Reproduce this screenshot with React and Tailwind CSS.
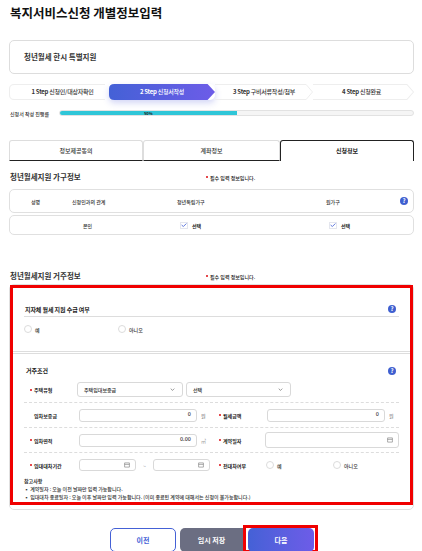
import React from "react";

const font = { fontFamily: '"Noto Sans CJK KR", "Noto Sans", sans-serif' };

function Help({ className = "" }) {
  return (
    <span className={"flex h-[8px] w-[8px] shrink-0 items-center justify-center rounded-full bg-[#3f5fd0] text-[6px] font-bold leading-none text-white " + className}>?</span>
  );
}

function Required({ children, className = "" }) {
  return (
    <span className={"flex items-center gap-[2px] text-[5px] font-bold leading-none text-[#222] " + className}>
      <span className="h-[2px] w-[2px] bg-[#e5484d]" />
      {children}
    </span>
  );
}

function Step({ width, label, sub, active, first, className = "" }) {
  return (
    <div className={"relative flex h-[16px] shrink-0 items-center justify-center " + width + " " + className}>
      <svg className="absolute inset-0 h-full w-full overflow-visible" viewBox="0 0 100 16" preserveAspectRatio="none">
        {active ? (
          <>
            <defs>
              <linearGradient id="stepg" x1="0" x2="1">
                <stop offset="0" stopColor="#4461d6" />
                <stop offset="1" stopColor="#6d5ce8" />
              </linearGradient>
            </defs>
            <path d="M5 0 H93 L100 8 L93 16 H5 Q0 16 0 11 V5 Q0 0 5 0 Z" fill="url(#stepg)" />
          </>
        ) : first ? (
          <path d="M96 0.5 H5 Q0.5 0.5 0.5 5 V11 Q0.5 15.5 5 15.5 H96" fill="none" stroke="#eeeeee" />
        ) : (
          <path d="M0 0.5 H93 L99.5 8 L93 15.5 H0" fill="none" stroke="#eeeeee" />
        )}
      </svg>
      <span className={"relative whitespace-nowrap text-[6px] font-medium leading-none tracking-[-0.25px] " + (active ? "text-white" : "text-[#333]")}>
        <b className="font-bold">{label}</b> {sub}
      </span>
    </div>
  );
}

function Tab({ label, active, width }) {
  return (
    <div
      className={
        "flex h-[21px] items-center justify-center rounded-t-[3px] text-[6px] leading-none " +
        width +
        (active
          ? " border border-b-0 border-[#222] font-bold text-[#222]"
          : " border border-b-[#222] border-[#ddd] font-medium text-[#333]")
      }
    >
      {label}
    </div>
  );
}

function Check({ className = "" }) {
  return (
    <span className={"flex items-center gap-[4px] text-[5px] font-bold leading-none text-[#222] " + className}>
      <span className="flex h-[7px] w-[8px] items-center justify-center border border-[#e4e6ee] bg-white">
        <svg viewBox="0 0 10 8" className="h-[6px] w-[7px]">
          <path d="M1 4 L4 6.5 L9 1.5" fill="none" stroke="#4461d6" strokeWidth="1.4" />
        </svg>
      </span>
      선택
    </span>
  );
}

function Radio({ label, className = "" }) {
  return (
    <span className={"flex items-center gap-[3px] text-[5px] font-medium leading-none text-[#333] " + className}>
      <span className="h-[8px] w-[8px] rounded-full border border-[#dcdcdc] bg-white" />
      {label}
    </span>
  );
}

function Calendar() {
  return (
    <svg viewBox="0 0 10 10" className="h-[6px] w-[6px]">
      <path d="M1 1.5 H9 V8.5 H1 Z M1 4 H9" fill="none" stroke="#777" strokeWidth="1" />
    </svg>
  );
}

function Caret() {
  return (
    <svg viewBox="0 0 8 5" className="h-[3px] w-[5px]">
      <path d="M1 1 L4 4 L7 1" fill="none" stroke="#555" strokeWidth="1" />
    </svg>
  );
}

function Box({ children, className = "" }) {
  return (
    <div className={"flex items-center justify-end rounded-[3px] border border-[#d9d9d9] bg-white px-[5px] text-[5.5px] font-medium leading-none text-[#333] " + className}>
      {children}
    </div>
  );
}

function Select({ label, className }) {
  return (
    <div className={"flex h-[15px] items-center justify-between rounded-[3px] border border-[#d9d9d9] bg-white pl-[6px] pr-[7px] text-[5px] font-medium leading-none text-[#333] " + className}>
      {label}
      <Caret />
    </div>
  );
}

export default function App() {
  return (
    <div className="h-[551px] w-[422px] overflow-hidden bg-white" style={font}>
      <div className="pl-[9px] pr-[8px]">
        <h1 className="h-[40px] pl-px pt-[3px] text-[12.5px] font-bold leading-[20px] text-[#111]">복지서비스신청 개별정보입력</h1>

        <div className="flex h-[34px] items-center rounded-[5px] border border-[#dddddd] pl-[14px] text-[7.5px] font-bold leading-none text-[#333]">
          청년월세 한시 특별지원
        </div>

        <div className="mt-[10px] flex">
          <Step first width="w-[100px]" className="pl-[7px]" label="1 Step" sub="신청인/대상자확인" />
          <div className="rounded-[5px] shadow-[0_3px_6px_rgba(80,90,220,0.25)]">
            <Step active width="w-[106px]" label="2 Step" sub="신청서작성" />
          </div>
          <Step width="w-[98px]" label="3 Step" sub="구비서류작성/첨부" />
          <Step width="w-[101px]" className="pr-[4px]" label="4 Step" sub="신청완료" />
        </div>

        <div className="mt-[10px] flex h-[6px] items-center">
          <span className="w-[50px] shrink-0 pl-px text-[5px] font-medium leading-none text-[#333]">신청서 작성 진행률</span>
          <div className="h-[6px] flex-1 overflow-hidden rounded-[3px] border border-[#e2e2e2] bg-[#f5f5f5]">
            <div className="flex h-full w-[50%] items-center justify-center bg-[#2fc6d8] text-[4px] font-bold leading-none text-[#222]">50%</div>
          </div>
        </div>

        <div className="mt-[24px] flex">
          <Tab width="w-[134px]" label="정보제공동의" />
          <Tab width="w-[137px]" label="계좌정보" />
          <Tab active width="w-[134px]" label="신청정보" />
        </div>

        <div className="mt-[10px] flex h-[12px] items-center">
          <h2 className="w-[197px] pl-px text-[7.5px] font-bold leading-none text-[#333]">청년월세지원 가구정보</h2>
          <Required className="!font-medium">필수 입력 정보입니다.</Required>
        </div>

        <div className="mt-[6px] flex h-[24px] items-center rounded-[5px] border border-[#e0e0e0] text-[5px] font-medium leading-none text-[#333]">
          <span className="w-[62px] pl-[21px]">성명</span>
          <span className="w-[105px]">신청인과의 관계</span>
          <span className="w-[149px]">청년독립가구</span>
          <span className="flex-1">원가구</span>
          <Help className="mr-[5px]" />
        </div>

        <div className="mt-[2px] flex h-[20px] items-center rounded-[5px] border border-[#e0e0e0] text-[5px] font-medium leading-none text-[#333]">
          <span className="w-[170px] pl-[73px]">본인</span>
          <Check className="w-[149px]" />
          <Check />
        </div>

        <div className="mt-[35px] flex h-[12px] items-center">
          <h2 className="w-[197px] pl-px text-[7.5px] font-bold leading-none text-[#333]">청년월세지원 거주정보</h2>
          <Required className="!font-medium">필수 입력 정보입니다.</Required>
        </div>

        <div className="mt-[2px] h-[226px] rounded-[5px] border border-[#e0e0e0]">
          <div className="h-[220px] border-[3px] border-[#f00000] bg-white">
            <div className="h-[63px] px-[11px] pt-[18px]">
              <div className="flex h-[11px] items-center justify-between border-b border-[#dddddd] pb-[2px]">
                <span className="pl-px text-[6px] font-bold leading-none tracking-[-0.1px] text-[#222]">지자체 월세 지원 수급 여부</span>
                <Help className="mb-[2px] mr-[3px]" />
              </div>
              <div className="mt-[8px] flex">
                <Radio className="w-[94px]" label="예" />
                <Radio label="아니오" />
              </div>
            </div>
            <div className="h-[3px] border-y border-[#dddddd]" />

            <div className="px-[11px] pt-[12px]">
              <div className="flex h-[9px] items-center justify-between">
                <span className="pl-[2px] text-[6px] font-bold leading-none text-[#222]">거주조건</span>
                <Help className="mr-[3px]" />
              </div>

              <div className="mt-[7px] flex h-[21px] items-center border-b border-dashed border-[#dddddd] pb-[5px]">
                <Required className="w-[53px] pl-[6px]">주택유형</Required>
                <Select className="w-[106px]" label="주택임대보증금" />
                <Select className="ml-[3px] w-[105px]" label="선택" />
              </div>

              <div className="flex h-[25px] items-center border-b border-dashed border-[#dddddd]">
                <span className="w-[55px] pl-[10px] text-[5px] font-bold leading-none text-[#222]">임차보증금</span>
                <Box className="h-[13px] w-[118px]">0</Box>
                <span className="w-[22px] pl-[4px] text-[5px] leading-none text-[#666]">원</span>
                <Required className="w-[48px]">월세금액</Required>
                <Box className="h-[13px] w-[118px]">0</Box>
                <span className="pl-[4px] text-[5px] leading-none text-[#666]">원</span>
              </div>

              <div className="flex h-[25px] items-center border-b border-dashed border-[#dddddd]">
                <Required className="w-[55px] pl-[6px]">임차면적</Required>
                <Box className="h-[13px] w-[118px]">0.00</Box>
                <span className="w-[22px] pl-[4px] text-[5px] leading-none text-[#999]">㎡</span>
                <Required className="w-[46px]">계약일자</Required>
                <Box className="h-[16px] w-[134px]"><Calendar /></Box>
              </div>

              <div className="flex h-[24px] items-center">
                <Required className="w-[55px] pl-[6px]">임대대차기간</Required>
                <Box className="h-[12px] w-[57px]"><Calendar /></Box>
                <span className="w-[17px] text-center text-[5px] leading-none text-[#888]">~</span>
                <Box className="h-[12px] w-[57px]"><Calendar /></Box>
                <Required className="ml-[9px] w-[47px]">전대차여부</Required>
                <Radio className="w-[67px]" label="예" />
                <Radio label="아니오" />
              </div>

              <div className="text-[5px] font-medium leading-[8px] text-[#333]">
                <p className="font-bold">참고사항</p>
                <p>▪ 계약일자 : 오늘 이전 날짜만 입력 가능합니다.</p>
                <p>▪ 임대대차 종료일자 : 오늘 이후 날짜만 입력 가능합니다. (이미 종료된 계약에 대해서는 신청이 불가능합니다.)</p>
              </div>
            </div>
          </div>
        </div>

        <div className="mt-[15px] flex items-start pl-[101px]">
          <button className="mt-[3px] flex h-[24px] w-[66px] items-center justify-center rounded-[5px] border border-[#4461d6] bg-white text-[7px] font-bold text-[#4461d6]">이전</button>
          <button className="ml-[4px] mt-[3px] flex h-[24px] w-[63px] items-center justify-center rounded-l-[5px] bg-[#6b6e82] text-[7px] font-bold text-white">임시 저장</button>
          <div className="flex h-[28px] w-[75px] justify-center border-[3px] border-[#f00000] pl-px">
            <button className="h-[24px] w-[66px] rounded-[5px] bg-gradient-to-r from-[#4461d6] to-[#6d5ce8] text-[7px] font-bold text-white">다음</button>
          </div>
        </div>
      </div>
    </div>
  );
}
